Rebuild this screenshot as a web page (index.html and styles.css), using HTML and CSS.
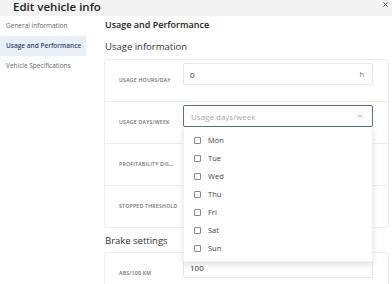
FILE: index.html
```html
<!DOCTYPE html>
<html lang="en">
<head>
    <meta charset="UTF-8">
    <meta name="viewport" content="width=device-width, initial-scale=1.0">
    <title>Edit vehicle info</title>
    <link rel="stylesheet" href="styles.css">
</head>
<body>
    <div class="modal">
        <header class="modal-head">
            <h2>Edit vehicle info</h2>
            <button class="close" aria-label="Close">
                <svg width="5" height="5" viewBox="0 0 5 5"><path d="M0.5 0.5 L4.5 4.5 M4.5 0.5 L0.5 4.5" stroke="#444" stroke-width="1"/></svg>
            </button>
        </header>

        <div class="modal-body">
            <nav class="side">
                <a class="side-item">General information</a>
                <a class="side-item active">Usage and Performance</a>
                <a class="side-item">Vehicle Specifications</a>
            </nav>

            <main class="content">
                <h3 class="section-title">Usage and Performance</h3>

                <h4 class="group-title">Usage information</h4>
                <div class="card">
                    <div class="row">
                        <div class="label">Usage hours/day</div>
                        <div class="field">
                            <div class="input"><span>0</span><span class="suffix">h</span></div>
                        </div>
                    </div>
                    <div class="row">
                        <div class="label">Usage days/week</div>
                        <div class="field">
                            <div class="input focused">
                                <span class="placeholder">Usage days/week</span>
                                <svg class="chevron" width="6" height="4" viewBox="0 0 6 4"><path d="M1 3.2 L3 1.2 L5 3.2" fill="none" stroke="#888" stroke-width="0.9"/></svg>
                            </div>
                            <!-- open multi-select -->
                            <ul class="dropdown">
                                <li><span class="check"></span>Mon</li>
                                <li><span class="check"></span>Tue</li>
                                <li><span class="check"></span>Wed</li>
                                <li><span class="check"></span>Thu</li>
                                <li><span class="check"></span>Fri</li>
                                <li><span class="check"></span>Sat</li>
                                <li><span class="check"></span>Sun</li>
                            </ul>
                        </div>
                    </div>
                    <div class="row">
                        <div class="label ellipsis">Profitability distance</div>
                        <div class="field">
                            <div class="input"></div>
                        </div>
                    </div>
                    <div class="row">
                        <div class="label">Stopped threshold</div>
                        <div class="field">
                            <div class="input"></div>
                        </div>
                    </div>
                </div>

                <h4 class="group-title brake">Brake settings</h4>
                <div class="card">
                    <div class="row">
                        <div class="label">ABS/100 km</div>
                        <div class="field">
                            <div class="input"><span>100</span></div>
                        </div>
                    </div>
                </div>
            </main>
        </div>
    </div>
</body>
</html>
```

FILE: styles.css
```css
* {
    box-sizing: border-box;
}
body {
    margin: 0;
    font-family: "Open Sans", "Noto Sans", Arial, sans-serif;
    background-color: #fff;
    color: #333;
    width: 392px;
    height: 284px;
    overflow: hidden;
}
.modal-head {
    height: 16px;
    background-color: #f3f3f3;
    display: flex;
    align-items: flex-start;
    justify-content: space-between;
    padding: 0 4px 0 13px;
}
.modal-head h2 {
    margin: 0;
    font-size: 11.5px;
    font-weight: 600;
    line-height: 13px;
    color: #222;
}
.close {
    background: none;
    border: none;
    padding: 0;
    width: 5px;
    height: 5px;
    display: flex;
    margin-top: 2px;
}
.modal-body {
    display: flex;
}
.side {
    width: 86px;
    flex-shrink: 0;
    display: flex;
    flex-direction: column;
}
.side-item {
    height: 20px;
    line-height: 20px;
    padding-left: 6px;
    font-size: 6.5px;
    color: #666;
    white-space: nowrap;
}
.side-item.active {
    background-color: #e9eff8;
    color: #2f4a6b;
    font-weight: 600;
}
.content {
    flex: 1;
    padding: 3px 3px 0 18px;
}
.section-title {
    margin: 0 0 9px 1px;
    font-size: 9px;
    line-height: 12px;
    font-weight: 600;
    color: #222;
}
.group-title {
    margin: 0 0 5px 1px;
    font-size: 9.5px;
    line-height: 14px;
    font-weight: 400;
    color: #333;
}
.group-title.brake {
    margin-top: 6px;
    margin-bottom: 4px;
}
.card {
    border: 1px solid #ececec;
    border-radius: 3px;
    background: white;
}
.row {
    display: flex;
    height: 42px;
    padding: 0 15px 0 14px;
    border-bottom: 1px solid #ececec;
}
.row:last-child {
    border-bottom: none;
    height: 41px;
}
.label {
    width: 64px;
    flex-shrink: 0;
    padding-right: 8px;
    align-self: center;
    font-size: 5.2px;
    font-weight: 600;
    letter-spacing: 0.22px;
    text-transform: uppercase;
    color: #707070;
    white-space: nowrap;
    overflow: hidden;
    margin-top: -2px;
}
.label.ellipsis {
    text-overflow: ellipsis;
}
.field {
    flex: 1;
    position: relative;
    padding-top: 3px;
}
.input {
    height: 22px;
    border: 1px solid #e6e6e6;
    border-radius: 2px;
    display: flex;
    align-items: center;
    justify-content: space-between;
    padding: 0 8px 0 6px;
    font-size: 8px;
    color: #333;
}
.input.focused {
    border-color: #5b6f91;
    padding-left: 7px;
}
.suffix {
    font-size: 7.5px;
    color: #777;
}
.placeholder {
    color: #aaa;
}
.chevron {
    margin-right: 1px;
}
.dropdown {
    position: absolute;
    top: 25px;
    left: 0;
    right: 0;
    margin: 0;
    padding: 4px 0 4px;
    list-style: none;
    background: white;
    border: 1px solid #f0f0f0;
    border-top: none;
    box-shadow: 0 3px 6px rgba(0, 0, 0, 0.12);
    z-index: 2;
}
.dropdown li {
    height: 18px;
    display: flex;
    align-items: center;
    padding-left: 10px;
    font-size: 7.5px;
    color: #444;
}
.check {
    width: 7px;
    height: 7px;
    border: 1px solid #888;
    border-radius: 1px;
    margin-right: 7px;
}
```
